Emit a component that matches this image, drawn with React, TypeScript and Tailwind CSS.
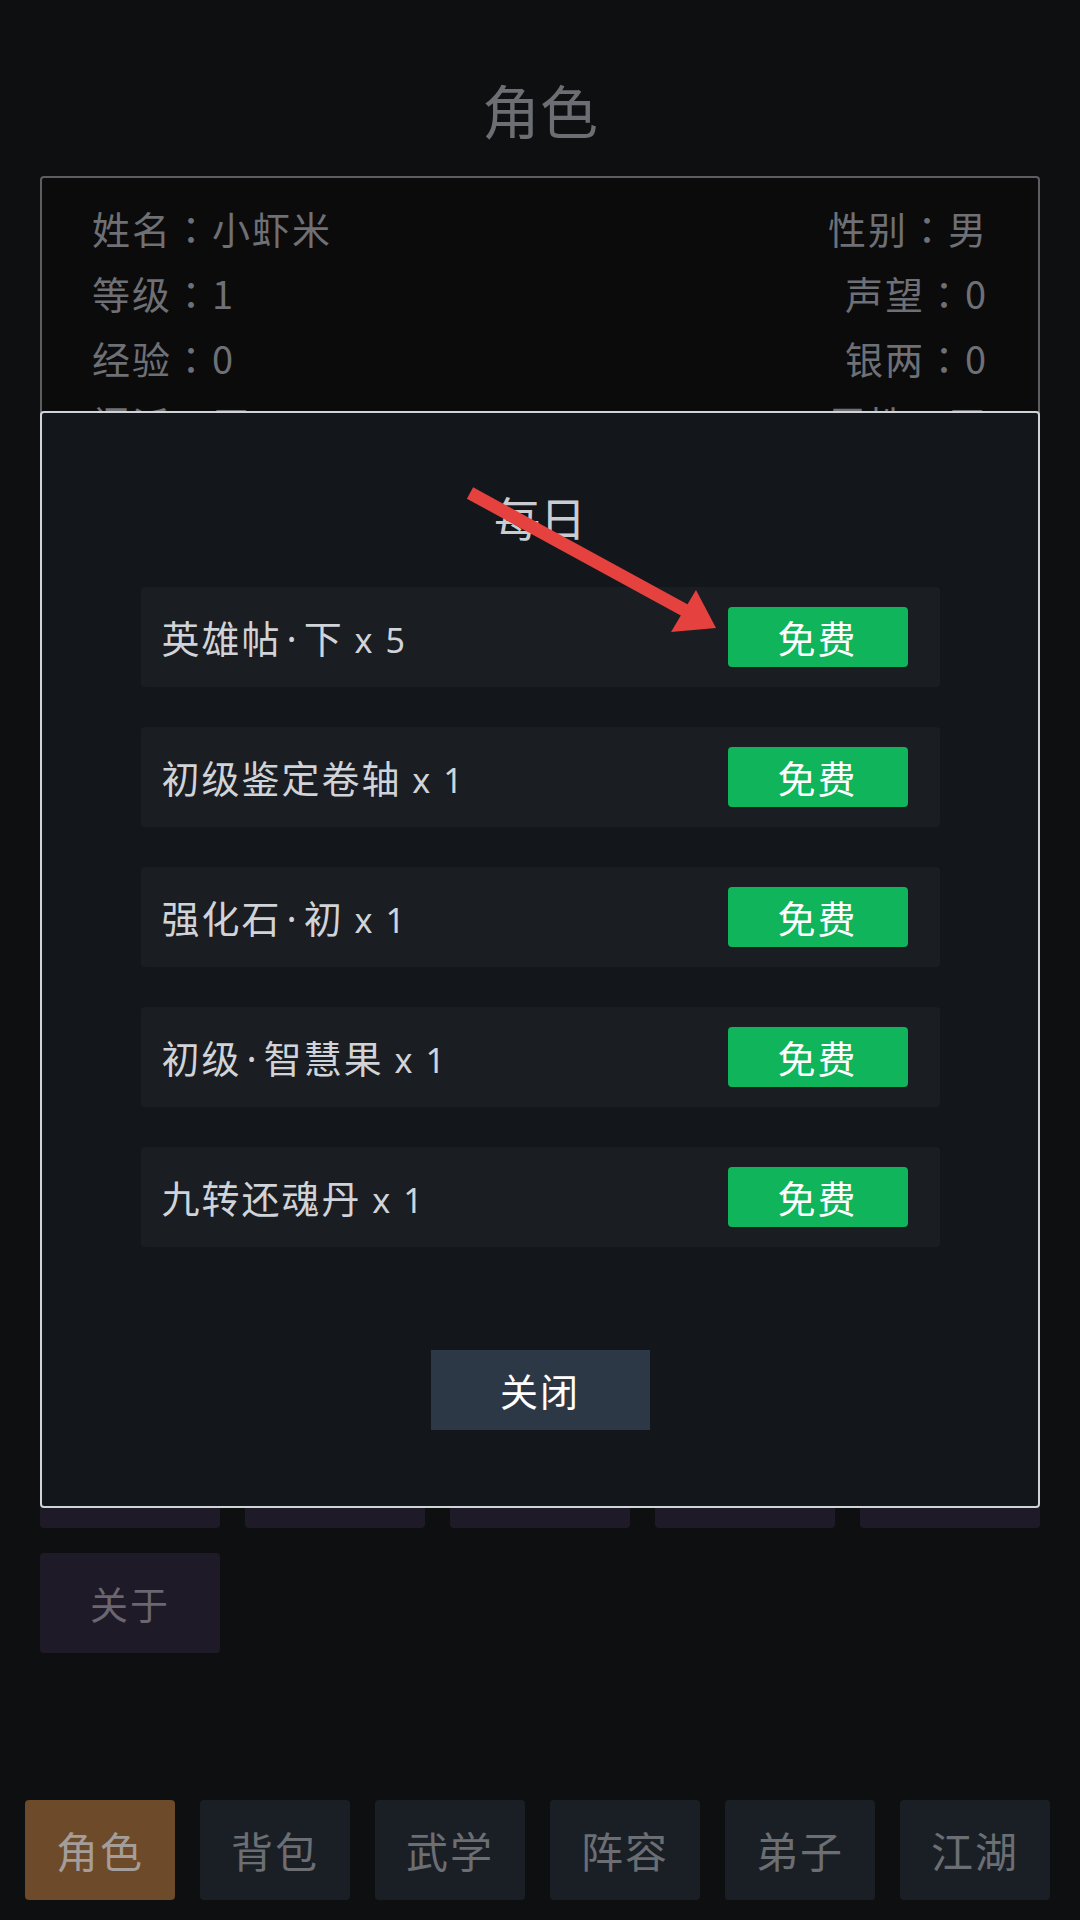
import React from "react";

const FONT = { fontFamily: '"Noto Sans CJK SC", "Noto Sans", sans-serif' };
const TC = { fontFamily: '"Noto Sans CJK TC", "Noto Sans CJK SC", sans-serif' };
const LATIN = { fontFamily: '"Noto Sans", "DejaVu Sans", sans-serif' };

const infoRows: [[string, string], [string, string]][] = [
  [["姓名", "小虾米"], ["性别", "男"]],
  [["等级", "1"], ["声望", "0"]],
  [["经验", "0"], ["银两", "0"]],
  [["门派", "无"], ["属性", "无"]],
];

const gridItems = ["", "", "", "", "", "关于"];

const dailyItems: [string, string | null, string][] = [
  ["英雄帖", "下", " x 5"],
  ["初级鉴定卷轴", null, " x 1"],
  ["强化石", "初", " x 1"],
  ["初级", "智慧果", " x 1"],
  ["九转还魂丹", null, " x 1"],
];

const navItems = ["角色", "背包", "武学", "阵容", "弟子", "江湖"];

function KV({ k, v }: { k: string; v: string }) {
  return (
    <span>
      {k}
      <span style={TC}>：</span>
      {v}
    </span>
  );
}

export default function App() {
  return (
    <div
      className="relative w-[1080px] h-[1920px] bg-[#0e0f11] flex flex-col overflow-hidden"
      style={FONT}
    >
      {/* Title */}
      <div className="mt-[80px] h-[58px] text-center text-[58px] leading-none text-[#6b6e73]">
        角色
      </div>

      {/* Info card */}
      <div className="mx-[40px] mt-[38px] h-[400px] border-2 border-[#5c5e62] rounded-[4px] bg-[#0b0b0c] px-[50px] py-[17px]">
        {infoRows.map(([l, r]) => (
          <div
            key={l[0]}
            className="flex justify-between h-[65px] items-center text-[38px] leading-none tracking-[2px] text-[#6e7075]"
          >
            <KV k={l[0]} v={l[1]} />
            <KV k={r[0]} v={r[1]} />
          </div>
        ))}
      </div>

      {/* Function grid */}
      <div className="mx-[40px] mt-[852px] grid grid-cols-5 gap-x-[25px] gap-y-[25px]">
        {gridItems.map((g, i) => (
          <div
            key={i}
            className="h-[100px] rounded-[4px] bg-[#1f1a27] flex items-center justify-center text-[38px] leading-none tracking-[2px] text-[#6b6670]"
          >
            {g}
          </div>
        ))}
      </div>

      {/* Bottom nav */}
      <div className="mt-auto mb-[20px] pl-[25px] flex gap-[25px]">
        {navItems.map((n, i) => (
          <div
            key={n}
            className={
              i === 0
                ? "w-[150px] h-[100px] rounded-[4px] bg-[#6c4a2a] flex items-center justify-center text-[42px] leading-none tracking-[2px] text-[#a49d99]"
                : "w-[150px] h-[100px] rounded-[4px] bg-[#1a1f26] flex items-center justify-center text-[42px] leading-none tracking-[2px] text-[#6b6e73]"
            }
          >
            {n}
          </div>
        ))}
      </div>

      {/* Modal */}
      <div className="absolute left-[40px] top-[411px] w-[1000px] h-[1097px] border-2 border-[#d0d3d8] rounded-[4px] bg-[#13171c] flex flex-col items-center">
        <div className="mt-[80px] h-[46px] text-[46px] leading-none text-[#c9ccd1]">
          每日
        </div>
        <div className="mt-[48px] w-[799px] flex flex-col gap-[40px]">
          {dailyItems.map(([a, b, c]) => (
            <div
              key={a}
              className="h-[100px] rounded-[4px] bg-[#1a1d21] flex items-center justify-between pl-[21px] pr-[32px]"
            >
              <span className="text-[38px] leading-none tracking-[2px] text-[#d0d3d8] whitespace-pre">
                {a}
                {b !== null && (
                  <>
                    <span style={LATIN} className="mx-[5px]">·</span>
                    {b}
                  </>
                )}
                <span style={LATIN} className="text-[34px]">{c}</span>
              </span>
              <div className="w-[180px] h-[60px] rounded-[4px] bg-[#10b45a] flex items-center justify-center text-[38px] leading-none tracking-[2px] text-white">
                免费
              </div>
            </div>
          ))}
        </div>
        <div className="mt-[103px] w-[219px] h-[80px] bg-[#2d3847] flex items-center justify-center text-[38px] leading-none tracking-[2px] text-white">
          关闭
        </div>
      </div>

      {/* Annotation arrow */}
      <svg
        className="absolute left-0 top-0 pointer-events-none"
        width="1080"
        height="1920"
        viewBox="0 0 1080 1920"
      >
        <line
          x1="470"
          y1="493"
          x2="688"
          y2="612"
          stroke="#e5413f"
          strokeWidth="13"
          strokeLinecap="butt"
        />
        <polygon points="696,590 671,632 716,628" fill="#e5413f" />
      </svg>
    </div>
  );
}
